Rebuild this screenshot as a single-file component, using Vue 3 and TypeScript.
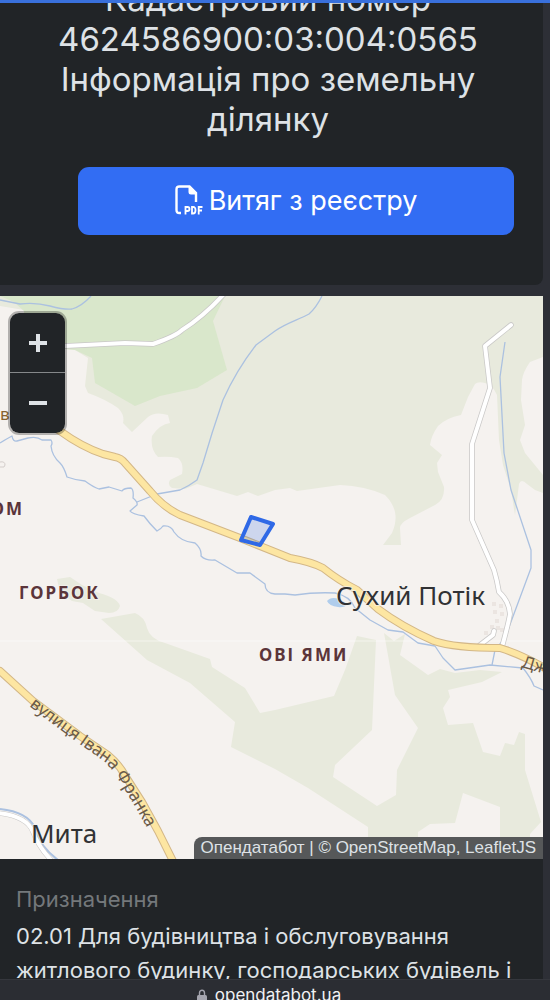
<script setup lang="ts">
import { ref } from 'vue'

const zoom = ref<number>(15)

const woods: string[] = [
  'M0 296H543V357L530 362Q523 372 522 380L521 400L525 425L520 440L525 453L543 475V493L535 490L527 484Q521 478 519 484L517 500L515 515L511 490L503 465L499 440L497 395Q492 384 485 383Q478 381 475 384L468 397L461 415Q446 418 438 426Q431 436 430 445L442 455L437 463L438 472L444 487Q445 500 435 505L410 518Q400 523 400 528L401 545H383L392 533Q397 522 395 512Q393 503 385 495Q365 486 340 485L297 491L290 488L275 490L258 496L248 492L237 496L197 484L185 489L172 488Q167 485 170 480L182 474Q184 463 178 458Q168 456 158 457Q150 449 152 436Q160 424 170 423L168 415Q155 411 148 417L132 432L123 423Q125 415 118 408Q105 399 88 393L85 386L88 358L75 350L24 345V310L0 306Z',
  'M57 579L70 577L82 585L99 593Q118 598 120 606Q118 613 109 613L95 611L83 603L72 601L60 592Z',
  'M101 619L135 613Q145 617 147 628Q150 639 165 643L210 659L212 667L245 688L260 713L275 710L334 696L345 670L357 636L376 640L372 730L335 765L333 777L377 806L396 795L397 770L418 728L395 695L384 633L394 641L405 634L400 655L428 675L440 669L455 673L480 670L502 672L482 682L448 690L450 697L443 708L448 725L473 723L483 752L500 756L505 743L514 745L519 732L525 734V770L541 822L530 834V859H500V807L463 793L455 823L430 824L418 832V859H368V827L308 788L275 769L231 747L235 722L190 683L147 660Z',
]

const meadow =
  'M0 296H225L213 321L227 370L197 388L160 396L135 406L95 383L92 358L75 350L24 345V311L14 302Z'

const streams: string[] = [
  'M0 300L20 304Q35 302 50 306T72 309Q82 306 91 296',
  'M322 296Q316 308 309 314C298 320 286 323 275 331L256 345Q236 371 223 400Q212 432 203 463L197 480Q189 486 180 490L157 494L137 502',
  'M0 443Q8 438 12 436Q13 442 17 441L28 438Q37 436 42 440L51 440Q53 443 51 446Q52 456 60 463Q64 467 67 477Q75 480 85 481Q93 487 99 489L109 487L122 491Q124 488 131 488Q134 490 133 498Q138 502 137 505L130 511Q132 514 144 516Q149 523 157 531Q161 529 163 526Q171 525 174 532Q181 542 195 543Q202 549 201 556Q206 561 215 560L237 573L250 573L265 584Q265 593 275 594L285 594L295 595Q315 592 335 593Q350 596 355 608L370 620L388 630L403 632L418 643L435 646L443 658L455 670L490 665L523 668Q531 678 534 686L543 690',
  'M505 342L500 377L504 453L511 490L531 550V568L505 638L495 650L492 665',
]

const minorRoads: string[] = [
  'M20 349L65 346L125 343L153 344Q176 336 182 330Q203 317 224 294',
  'M511 325L485 346L490 388L472 444V520L494 570Q497 580 499 592Q509 601 510 614Q508 625 502 647',
  'M480 645L493 635L494 631',
]

const mainRoads: string[] = [
  'M20 412Q44 421 60 431Q82 447 103 454L115 457Q121 458 125 463L150 491Q163 507 180 515L240 538L290 558Q312 562 323 568Q338 580 357 590L378 609Q402 627 434 641Q455 648 500 648Q520 654 543 667',
  'M0 671L33 701L80 736L108 755Q119 764 126 777L142 802L158 831L174 863',
]

const buildings: [number, number][] = [
  [492, 602], [499, 604], [493, 610], [500, 612], [495, 619], [490, 625], [496, 626], [484, 631], [500, 628],
]
</script>

<template>
  <div class="page">
    <div class="progress"></div>
    <main class="content">
      <section class="hero">
        <h1>Кадастровий номер<br />4624586900:03:004:0565<br />Інформація про земельну ділянку</h1>
        <button type="button" class="extract">
          <svg class="pdf" viewBox="0 0 28 30" aria-hidden="true">
            <path d="M6 28H4.500Q1.500 28 1.500 25V4.500Q1.500 1.500 4.500 1.500H14.500L21 8V17" fill="none" stroke="#fff" stroke-width="2.400" />
            <path d="M13.500 1V7Q13.500 9.500 16 9.500H22V8L15 1Z" fill="#fff" />
            <path d="M10.500 29.500V22H12.500Q14.500 22 14.500 24T12.500 26H10.500M17 22V28.500H18Q20.500 28.500 20.500 25.200T18 22ZM23.700 29.500V22H27.500M23.700 25.500H27" fill="none" stroke="#fff" stroke-width="1.800" />
          </svg>
          <span>Витяг з реєстру</span>
        </button>
      </section>

      <section class="map" aria-label="Карта">
        <svg class="tiles" viewBox="0 296 543 563" preserveAspectRatio="xMidYMid slice">
          <rect y="296" width="543" height="563" fill="#f5f2ef" />
          <path v-for="d in woods" :key="d" :d="d" fill="#e8eadd" />
          <path :d="meadow" fill="#d9e7cb" />
          <path d="M0 641H543" stroke="#fff" stroke-opacity="0.5" />
          <g fill="none" stroke="#abc1e0" stroke-width="1.300" stroke-linejoin="round">
            <path v-for="d in streams" :key="d" :d="d" />
            <path d="M0 809Q28 812 35 828Q40 847 58 860" stroke-width="2" />
          </g>
          <path d="M327 601Q331 596 339 599L348 604Q344 608 338 607Q329 606 327 601Z" fill="#b0cdec" />
          <rect v-for="([x, y], i) in buildings" :key="i" :x="x" :y="y" width="4" height="4" fill="#ebe5e1" />
          <path d="M0 462Q5 461 5 465L4 467H0" fill="none" stroke="#d3cdca" />
          <g fill="none" stroke-linecap="round" stroke-linejoin="round">
            <path v-for="d in minorRoads" :key="d" :d="d" stroke="#c9c8c7" stroke-width="5.500" />
            <path v-for="d in minorRoads" :key="d + 'f'" :d="d" stroke="#fff" stroke-width="4" />
            <path d="M-2 813Q27 816 33 832Q39 848 53 862" stroke="#c9c8c7" stroke-width="5" />
            <path d="M-2 813Q27 816 33 832Q39 848 53 862" stroke="#fff" stroke-width="4" />
            <path v-for="d in mainRoads" :key="d" :d="d" stroke="#d3b787" stroke-width="8" />
            <path v-for="d in mainRoads" :key="d + 'f'" :d="d" stroke="#fde6a2" stroke-width="6" />
          </g>
          <path d="M251 517L273 524L260 545L241 540Z" fill="#2f69e6" fill-opacity="0.200" stroke="#2f69e6" stroke-width="4" stroke-linejoin="round" />

          <path id="franka" d="M29 706L78 743L105 762Q113 770 120 782L136 808L156 844" fill="none" />
          <text class="street"><textPath href="#franka">вулиця Івана Франка</textPath></text>
          <text class="street edge" x="0" y="420">в</text>
          <text class="street" transform="translate(521 667) rotate(16)">Дже</text>
          <text class="locality" x="24" y="515" text-anchor="end">РОМ</text>
          <text class="locality" x="19" y="599">ГОРБОК</text>
          <text class="locality" x="259" y="661">ОВІ ЯМИ</text>
          <text class="village" x="336" y="605">Сухий Потік</text>
          <text class="village" x="31" y="843">Мита</text>
        </svg>

        <div class="zoom">
          <button type="button" aria-label="Збільшити" @click="zoom++">
            <svg viewBox="0 0 18 18" aria-hidden="true"><path d="M0 9H18M9 0V18" /></svg>
          </button>
          <button type="button" aria-label="Зменшити" @click="zoom--">
            <svg viewBox="0 0 18 18" aria-hidden="true"><path d="M0 9H18" /></svg>
          </button>
        </div>
        <div class="attribution">
          <a href="#">Опендатабот</a> | © <a href="#">OpenStreetMap</a>, <a href="#">LeafletJS</a>
        </div>
      </section>

      <section class="info">
        <h2>Призначення</h2>
        <p>02.01 Для будівництва і обслуговування житлового будинку, господарських будівель і споруд</p>
      </section>
    </main>

    <footer class="address">
      <svg viewBox="0 0 10 14" aria-hidden="true">
        <path d="M2.500 7V4A2.500 2.800 0 0 1 7.500 4V7" fill="none" stroke="#a4a4ae" stroke-width="1.400" />
        <rect y="6" width="10" height="8" rx="1.500" fill="#a4a4ae" />
      </svg>
      <span>opendatabot.ua</span>
    </footer>
  </div>
</template>

<style>
body {
  margin: 0;
  background: #2d2f36;
}
</style>

<style scoped>
.page {
  display: flex;
  flex-direction: column;
  height: 100vh;
  overflow: hidden;
  background: #2d2f36;
  color: #dee2e6;
  font-family: Inter, "Liberation Sans", sans-serif;
}
.progress {
  position: fixed;
  z-index: 2;
  top: 0;
  left: 0;
  right: 0;
  height: 3px;
  background: #3970dc;
}
.content {
  flex: 1;
  min-height: 0;
  overflow: hidden;
  padding-right: 7px;
}
.hero {
  margin-top: -21px;
  padding: 0 29px 50px 22px;
  background: #212427;
  border-radius: 0 0 8px 0;
}
h1 {
  margin: 0;
  font-size: 33px;
  line-height: 40px;
  font-weight: 400;
  text-align: center;
}
.extract {
  display: flex;
  align-items: center;
  justify-content: center;
  gap: 6px;
  width: calc(100% - 56px);
  height: 68px;
  margin: 28px 0 0 56px;
  padding: 0 6px 2px;
  border: 0;
  border-radius: 11px;
  background: #326df3;
  color: #fff;
  font: 400 27px Inter, "Liberation Sans", sans-serif;
}
.pdf {
  width: 28px;
  height: 30px;
}
.map {
  position: relative;
  margin-top: 11px;
}
.tiles {
  display: block;
  width: 100%;
}
.tiles text {
  font-family: "Noto Sans", sans-serif;
  paint-order: stroke;
  stroke: #f5f2ef;
  stroke-opacity: 0.7;
  stroke-width: 2px;
}
.tiles .street {
  font-size: 17px;
  fill: #6a5a49;
  stroke: none;
}
.tiles .edge {
  fill: #87642f;
}
.tiles .locality {
  font-size: 17px;
  font-weight: 700;
  letter-spacing: 2px;
  fill: #5b353a;
}
.tiles .village {
  font-size: 26px;
  fill: #313234;
}
.zoom {
  position: absolute;
  top: 15px;
  left: 8px;
  width: 55px;
  border: 2px solid rgba(0, 0, 0, 0.27);
  border-radius: 11px;
  overflow: hidden;
}
.zoom button {
  box-sizing: border-box;
  display: flex;
  align-items: center;
  justify-content: center;
  width: 100%;
  height: 60px;
  padding: 0;
  border: 0;
  background: #212427;
}
.zoom button:first-child {
  border-bottom: 1px solid #85888a;
}
.zoom svg {
  width: 18px;
  height: 18px;
}
.zoom path {
  fill: none;
  stroke: #dee2e6;
  stroke-width: 4;
}
.attribution {
  position: absolute;
  right: 0;
  bottom: 0;
  padding: 0 7px;
  border-top-left-radius: 8px;
  background: #565859;
  color: #dee2e6;
  font: 17px/22px "Liberation Sans", sans-serif;
}
.attribution a {
  color: inherit;
  text-decoration: none;
}
.info {
  padding: 23px 16px 40px;
  background: #212427;
}
h2,
p {
  margin: 0;
  font-size: 22px;
  line-height: 34px;
  font-weight: 400;
}
h2 {
  color: #74787b;
  margin-bottom: 3px;
}
.address {
  display: flex;
  justify-content: center;
  gap: 8px;
  height: 20px;
  padding-right: 12px;
  border-top: 1px solid #35373d;
  background: #2b2d33;
  color: #f1f1f4;
  font-size: 17px;
  line-height: 30px;
}
.address svg {
  width: 10px;
  height: 14px;
  margin-top: 9px;
}
</style>
